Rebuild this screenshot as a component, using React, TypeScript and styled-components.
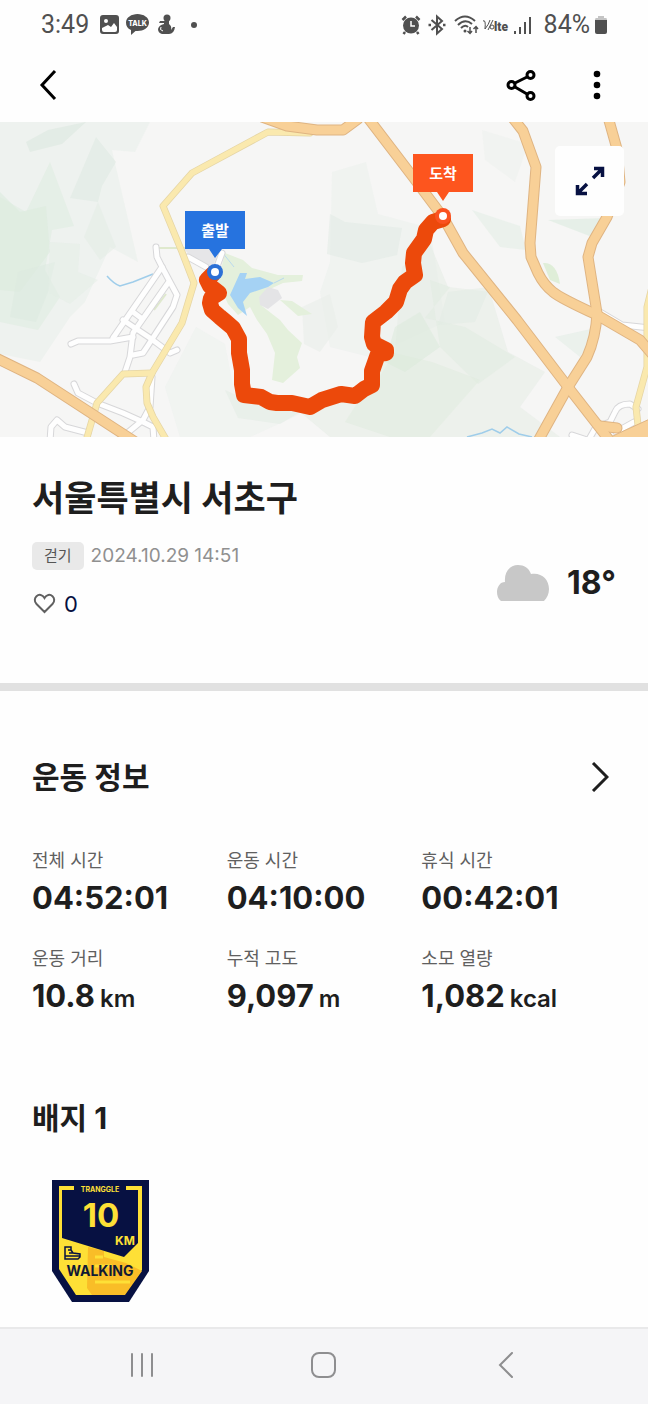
import React from "react";
import styled, { createGlobalStyle } from "styled-components";

const GlobalStyle = createGlobalStyle`
  *, *::before, *::after { box-sizing: border-box; }
  body { margin: 0; background: #fefefe; }
  button { font: inherit; color: inherit; background: none; border: 0; padding: 0; cursor: pointer; }
  h1, h2, dl, dd, dt { margin: 0; }
  svg { display: block; }
`;

const Screen = styled.div`
  display: flex;
  flex-direction: column;
  min-height: 100vh;
  background: #fefefe;
  color: #1e1e1e;
  font-family: Inter, "Noto Sans CJK KR", sans-serif;
`;

const StatusBar = styled.div`
  display: flex;
  justify-content: space-between;
  align-items: center;
  height: 50px;
  padding: 0 40px 0 41px;
  color: #505050;
  font: 400 25px/28px Roboto, sans-serif;
`;

const StatusGroup = styled.div<{ $gap: number }>`
  display: flex;
  align-items: center;
  gap: ${(p) => p.$gap}px;
`;

const AppBar = styled.header`
  display: flex;
  justify-content: space-between;
  align-items: center;
  height: 72px;
  padding: 0 27px 3px 24px;
  color: #000;
`;

const AppActions = styled.div`
  display: flex;
  gap: 28px;
`;

const IconButton = styled.button`
  display: flex;
  align-items: center;
  justify-content: center;
  width: 48px;
  height: 48px;
`;

const MapArea = styled.section`
  position: relative;
  overflow: hidden;
  > svg { width: 100%; height: auto; }
`;

const ExpandButton = styled.button`
  position: absolute;
  top: 24px;
  right: 24px;
  display: flex;
  align-items: center;
  justify-content: center;
  width: 69px;
  height: 70px;
  border-radius: 5px;
  background: #fefefe;
`;

const Summary = styled.section`
  padding: 37px 32px 65px;
`;

const Title = styled.h1`
  font-size: 35px;
  line-height: 48px;
  font-weight: 700;
`;

const SummaryRow = styled.div`
  display: flex;
  justify-content: space-between;
  align-items: center;
  margin-top: 20px;
`;

const Meta = styled.div`
  display: flex;
  flex-direction: column;
  align-items: flex-start;
  gap: 20px;
`;

const Activity = styled.div`
  display: flex;
  align-items: center;
  gap: 7px;
`;

const Chip = styled.span`
  padding: 0 12px;
  border-radius: 5px;
  background: #e9e9e9;
  color: #555;
  font-size: 15px;
  line-height: 28px;
`;

const DateText = styled.time`
  color: #909090;
  font-size: 19px;
  line-height: 28px;
`;

const LikeButton = styled.button`
  display: flex;
  align-items: center;
  gap: 7px;
  color: #07103f;
  font-size: 22px;
  line-height: 28px;
`;

const Weather = styled.div`
  display: flex;
  align-items: center;
  gap: 18px;
  padding-top: 5px;
  font-size: 32px;
  line-height: 40px;
  font-weight: 700;
`;

const Divider = styled.hr`
  width: 100%;
  height: 8px;
  margin: 0;
  border: 0;
  background: #e1e1e1;
`;

const Details = styled.main`
  flex: 1;
  padding: 66px 32px 24px;
`;

const SectionHead = styled.div`
  display: flex;
  justify-content: space-between;
  align-items: center;
  height: 40px;
`;

const SectionTitle = styled.h2`
  font-size: 30px;
  line-height: 40px;
  font-weight: 700;
`;

const MoreButton = styled.button`
  display: flex;
  align-items: center;
  justify-content: center;
  width: 32px;
  height: 40px;
`;

const StatGrid = styled.dl`
  display: grid;
  grid-template-columns: repeat(3, 1fr);
  row-gap: 29px;
  margin: 52px 0 82px;
`;

const StatLabel = styled.dt`
  color: #606060;
  font-size: 18px;
  line-height: 24px;
`;

const StatValue = styled.dd`
  margin-top: 5px;
  font-size: 31px;
  line-height: 40px;
  font-weight: 700;
  white-space: nowrap;
`;

const Unit = styled.span`
  margin-left: 5px;
  font-size: 24px;
  line-height: 24px;
  font-weight: 600;
`;

const BadgeList = styled.div`
  display: flex;
  padding: 42px 20px 0;
`;

const SystemNav = styled.nav`
  display: grid;
  flex-shrink: 0;
  grid-template-columns: repeat(3, 182px);
  justify-content: center;
  height: 77px;
  padding-bottom: 3px;
  border-top: 2px solid #e9e9ea;
  background: #f5f5f7;
`;

const NavButton = styled.button`
  display: flex;
  align-items: center;
  justify-content: center;
`;

const ORANGE_ROADS = [
  "M-4 236L37 256L134 319",
  "M262 -5L287 4L317 8H343L358 -3",
  "M368 -4L413 55L443 95L463 131L517 198L568 265L610 319",
  "M512 -5L523 9L536 45L530 121L531 135L538 151Q544 163 553 170Q560 176 597 193L640 218L652 232",
  "M608 -5L617 27L620 60L607 95L592 121L588 135L597 191Q596 215 587 235L568 265L538 319",
  "M600 304L617 306",
];
const YELLOW_ROADS = [
  "M310 11L268 10L192 51L163 84L182 130L194 161L182 201L152 251L146 265L147 281L153 295L167 319",
  "M152 251L123 252L97 281L86 319",
  "M652 165L647 185V245L636 285L638 303",
];
const WHITE_ROADS = [
  "M156 125L157 135L162 145L170 160L177 173L173 185L147 225L143 231L133 233",
  "M162 145L113 216",
  "M71 222L78 219H110L133 215",
  "M168 161L133 211L130 235L125 250",
  "M123 198L150 216L170 231L177 228",
  "M133 190L141 196",
  "M74 262L78 271L97 281L123 291L143 300L153 305L154 319",
  "M152 255L150 285L143 298L120 317",
  "M50 319L51 305L57 298L65 305L88 311",
  "M188 135L206 145",
  "M222 131L215 150",
  "M600 190L622 203L650 206",
  "M588 319L596 305L610 300L615 290Q618 282 630 282L638 287",
  "M572 313L590 319",
  "M616 310L634 300",
];
const ROUTE =
  "M213 152L207 158L210 164L219 171L211 176L210 181L212 188L220 195L226 200L233 206L239 217L239 231L242 248L242 262L244 273L261 275L270 280L277 281L292 281L310 285L322 278L341 272L355 274L364 267L372 263L372 249L378 232L386 231L386 228L374 222L372 215L373 200L386 190L396 180L400 167L405 160L415 153L413 141L414 131L424 117L426 108L433 100L443 97";

const HILLS: [string, string, number][] = [
  ["M0 0H150L135 30L112 28L138 140L110 125L85 180L70 195L40 240L0 232Z", "#ebf1ec", 0.7],
  ["M26 20L48 8L86 0L62 22L30 30Z", "#dce8e0", 0.6],
  ["M96 15L116 40L102 64L98 80L70 76L82 48Z", "#dfe9e2", 0.6],
  ["M50 40L74 104L52 108L45 148L60 175L38 208L0 200V75L26 90Z", "#e0ede1", 0.6],
  ["M0 70L20 90L46 84L50 130L20 170L0 168Z", "#dcebdd", 0.6],
  ["M18 150L55 140L48 170L36 200L10 195Z", "#dce9df", 0.5],
  ["M98 80L116 125L100 138L84 115Z", "#e2ece4", 0.5],
  ["M50 120L80 122L78 150L98 158L70 182L48 170Z", "#e4eee5", 0.5],
  ["M332 50L366 40L378 92L430 106L445 200L370 235L330 225L320 170L330 140Z", "#e9f0ea", 0.45],
  ["M330 92L345 100L402 106L397 133L362 141L327 132Z", "#e0eae3", 0.5],
  ["M402 145L430 122L448 165L490 170L508 230L545 250L520 285L560 315H330L300 290L370 270L395 230Z", "#e3ece4", 0.5],
  ["M430 158L450 165L425 196L465 205L515 235L478 262L440 225Z", "#dfece0", 0.5],
  ["M390 230L432 240L480 258L430 315H390L345 300Z", "#dfecde", 0.5],
  ["M395 205L420 190L440 225L405 250L385 240Z", "#daead9", 0.5],
  ["M448 170L490 165L475 200L438 203Z", "#e2ebe4", 0.5],
  ["M555 215L600 205L580 235Z", "#e0ebe3", 0.5],
  ["M482 8L528 22L515 60L485 38Z", "#eef1ee", 0.6],
  ["M472 88L520 104L526 128L500 125Z", "#e4eee6", 0.6],
  ["M548 98L606 96L592 115Z", "#dcebe0", 0.6],
  ["M196 205L225 222L235 275L300 292L250 315H180L165 265Z", "#ecf2ed", 0.5],
  ["M302 185L330 172L338 205L320 230L304 222Z", "#e9efea", 0.6],
  ["M225 268L262 285L300 290L280 302L238 296Z", "#e2ece3", 0.5],
];

function RouteMap() {
  return (
    <svg viewBox="0 0 648 315" role="img" aria-label="이동 경로 지도">
      <rect width="648" height="315" fill="#f6f6f5" />
      {HILLS.map(([d, fill, opacity]) => (
        <path key={d} d={d} fill={fill} opacity={opacity} />
      ))}
      <path d="M225 131L243 138L252 146L278 153L303 153L302 159L283 161L268 168L262 184L280 198L288 208L302 221L297 235L300 246L283 261L272 258L275 231L267 212L257 198L250 185L238 193L228 182L218 160Z" fill="#e4f0dc" />
      <path d="M280 178L292 179L312 192L298 194Z" fill="#e4f0dc" />
      <path d="M543 141Q557 140 560 162L550 158Z" fill="#dfeed8" />
      <path d="M259 175L268 165L278 168L282 176L268 187L260 183Z" fill="#e4e4e6" />
      <path d="M184 127H220L212 146L200 144Z" fill="#e6e6e8" />
      <path d="M157 126H186M166 172L154 188" fill="none" stroke="#dfe9cd" strokeWidth="2" />
      <path d="M240 151H247L245 157L260 155L274 161L268 165L250 171L243 180L247 194L238 186L230 173Z" fill="#a5d2f4" />
      <path d="M222 130L234 145M284 156L274 161" fill="none" stroke="#b9d9ee" strokeWidth="1" />
      <path d="M107 154Q114 162 120 164L133 160L153 152M467 315L482 311L492 307L500 311L507 305L519 312L532 315" fill="none" stroke="#9fcdea" strokeWidth="1.5" />
      <g fill="none" strokeLinejoin="round" strokeLinecap="round">
        {WHITE_ROADS.map((d) => <path key={d} d={d} stroke="#d7d7d9" strokeWidth="7" />)}
        {WHITE_ROADS.map((d) => <path key={d} d={d} stroke="#fefefe" strokeWidth="5" />)}
        {YELLOW_ROADS.map((d) => <path key={d} d={d} stroke="#e5d5a5" strokeWidth="7" />)}
        {YELLOW_ROADS.map((d) => <path key={d} d={d} stroke="#fae9ae" strokeWidth="5.500" />)}
        {ORANGE_ROADS.map((d) => <path key={d} d={d} stroke="#dfb482" strokeWidth="11" />)}
        <path d="M605 318L617 312L652 296V318Z" fill="#f8d097" stroke="#dfb482" />
        {ORANGE_ROADS.map((d) => <path key={d} d={d} stroke="#f8d097" strokeWidth="9" />)}
        <path d={ROUTE} stroke="#ec490b" strokeWidth="16" />
      </g>
      <circle cx="215" cy="150" r="8" fill="#2c70d6" />
      <circle cx="215" cy="150" r="4" fill="#fff" />
      <circle cx="443" cy="94" r="8" fill="#fa5220" />
      <circle cx="443" cy="94" r="4" fill="#fff" />
      <path d="M185 89H245V127H222L215 136L209 127H185Z" fill="#2673df" />
      <path d="M413 32H473V70H449L443 79L437 70H413Z" fill="#fd551e" />
      <g fill="#fff" fontSize="15" fontWeight="700" textAnchor="middle">
        <text x="215" y="114">출발</text>
        <text x="443" y="57">도착</text>
      </g>
    </svg>
  );
}

function NotificationIcons() {
  return (
    <svg width="100" height="24" viewBox="0 0 100 24" fill="#505050" aria-hidden="true">
      <path fillRule="evenodd" d="M4 2H17Q20 2 20 5V18Q20 21 17 21H4Q1 21 1 18V5Q1 2 4 2ZM3 15V17Q3 19 5 19H16Q18 19 18 17V14L15 10L12 14L9 12ZM7 6A2 2 0 1 0 7 10A2 2 0 1 0 7 6Z" />
      <path d="M38.500 1C44.500 1 50 4.500 50 9.500S44.500 18 38.500 18L36.500 18L32 22L32 17C28.500 15.500 27 13 27 9.500C27 4.500 32.500 1 38.500 1Z" />
      <text x="38.500" y="13" fill="#fff" fontFamily="Inter, sans-serif" fontSize="7" fontWeight="800" textAnchor="middle">TALK</text>
      <circle cx="68" cy="5" r="3.500" />
      <path d="M66 8H70L70 11Q73 13 72 17L74 14L76 14Q75 21 70 21H63Q59 20 59 16Q60 12 65 11L65 10L60 10L61 8Z" />
      <path d="M62 14Q60 17 64 18" fill="none" stroke="#fff" />
      <circle cx="95" cy="12" r="3" />
    </svg>
  );
}

function ConnectionIcons() {
  return (
    <svg width="131" height="24" viewBox="0 0 131 24" fill="none" stroke="#505050" aria-hidden="true">
      <circle cx="10" cy="12.500" r="8" fill="#505050" stroke="none" />
      <path d="M1.500 7L5 3.500M18.500 7L15 3.500M4 19L2.500 21M16 19L17.500 21" strokeWidth="2.500" />
      <path d="M10 8V13H14" stroke="#fff" strokeWidth="1.500" />
      <path d="M30.500 7L41 16L36 20.500V3.500L41 8L30.500 17" strokeWidth="2" />
      <path d="M27.500 12H30M42 12H44.500" strokeWidth="2.500" />
      <path d="M54 8Q64 -1 74 8M57 12Q64 5 71 11M60 15Q64 11 67 14" strokeWidth="2" />
      <circle cx="64" cy="18" r="1.500" fill="#505050" stroke="none" />
      <path d="M69 14V20M66.500 18L69 20.500L71 18M75 20V14M72.500 16L75 13.500L77 16" strokeWidth="1.500" />
      <path d="M82 8Q85 6 84 16Q88 11 89 7M92 7L87 17" strokeWidth="1" />
      <circle cx="91" cy="14" r="2" />
      <text x="93" y="18" fill="#505050" stroke="none" fontFamily="Roboto, sans-serif" fontSize="12" fontWeight="900">lte</text>
      <path d="M114 18V21M119 14V21M124 9V21M129 4V21" strokeWidth="2" />
    </svg>
  );
}

function WalkingBadge() {
  return (
    <svg width="97" height="122" viewBox="0 0 97 122" role="img" aria-label="10KM WALKING 배지">
      <path d="M0 0H97V91L77 122H20L0 91Z" fill="#071142" />
      <path d="M7 6H90V90L72 115H24L7 89Z" fill="#fee036" />
      <path d="M36 67L52 71V77L74 83L90 91L73 115H40L35 108Z" fill="#f9bd27" />
      <path d="M43 77H51M43 86H60M43 102H78" stroke="#fee036" strokeWidth="3" />
      <path d="M10 10H86V63L72 77L10 58Z" fill="#071142" />
      <path d="M22 5H74V12H22Z" fill="#071142" />
      <g fill="#fee036" fontWeight="700" textAnchor="middle">
        <text x="48" y="12" fontSize="7">TRANGGLE</text>
        <text x="49" y="47" fontSize="33">10</text>
        <text x="73" y="65" fontSize="12">KM</text>
      </g>
      <path d="M13 67H19V70L21 73L28 74V77L26 79H13ZM13 76H28M19 70H16M21 73H17" fill="none" stroke="#071142" strokeWidth="1.500" />
      <text x="48" y="96" fill="#111a35" fontSize="14" fontWeight="700" textAnchor="middle">WALKING</text>
    </svg>
  );
}

const STATS = [
  { label: "전체 시간", value: "04:52:01" },
  { label: "운동 시간", value: "04:10:00" },
  { label: "휴식 시간", value: "00:42:01" },
  { label: "운동 거리", value: "10.8", unit: "km" },
  { label: "누적 고도", value: "9,097", unit: "m" },
  { label: "소모 열량", value: "1,082", unit: "kcal" },
];

export default function App() {
  return (
    <Screen>
      <GlobalStyle />
      <StatusBar>
        <StatusGroup $gap={10}>
          <span>3:49</span>
          <NotificationIcons />
        </StatusGroup>
        <StatusGroup $gap={12}>
          <ConnectionIcons />
          <StatusGroup $gap={4}>
            <span>84%</span>
            <svg width="14" height="20" viewBox="0 0 14 20" aria-hidden="true">
              <path d="M4 1H10V3H12Q13 3 13 5H1Q1 3 2 3H4Z" fill="#c4c4c4" />
              <path d="M1 5H13V17Q13 19 11 19H3Q1 19 1 17Z" fill="#505050" />
            </svg>
          </StatusGroup>
        </StatusGroup>
      </StatusBar>

      <AppBar>
        <IconButton aria-label="뒤로">
          <svg width="18" height="32" viewBox="0 0 18 32" fill="none" stroke="currentColor" strokeWidth="3">
            <path d="M16 2L3 16L16 30" />
          </svg>
        </IconButton>
        <AppActions>
          <IconButton aria-label="공유">
            <svg width="30" height="32" viewBox="0 0 30 32" fill="none" stroke="currentColor" strokeWidth="3">
              <path d="M9 14L21 8M9 18L21 25" />
              <circle cx="5.500" cy="16" r="3.500" />
              <circle cx="24.500" cy="6" r="3.500" />
              <circle cx="24.500" cy="27" r="3.500" />
            </svg>
          </IconButton>
          <IconButton aria-label="더보기">
            <svg width="8" height="30" viewBox="0 0 8 30" fill="currentColor">
              <circle cx="4" cy="4" r="3.300" />
              <circle cx="4" cy="15" r="3.300" />
              <circle cx="4" cy="26" r="3.300" />
            </svg>
          </IconButton>
        </AppActions>
      </AppBar>

      <MapArea>
        <RouteMap />
        <ExpandButton aria-label="지도 확대">
          <svg width="30" height="30" viewBox="0 0 30 30" fill="none" stroke="#071142" strokeWidth="3.500">
            <path d="M19 2.500H27.500V11M27.500 2.500L18 12M2.500 19V27.500H12M2.500 27.500L12 18" />
          </svg>
        </ExpandButton>
      </MapArea>

      <Summary>
        <Title>서울특별시 서초구</Title>
        <SummaryRow>
          <Meta>
            <Activity>
              <Chip>걷기</Chip>
              <DateText dateTime="2024-10-29T14:51">2024.10.29 14:51</DateText>
            </Activity>
            <LikeButton aria-label="좋아요 0">
              <svg width="25" height="22" viewBox="0 0 25 22" fill="none" stroke="#606060" strokeWidth="2">
                <path d="M12.500 19L4.500 11C2 8.500 2.500 5 4.500 3.200C7 1 10.500 1.500 12.500 5C14.500 1.500 18 1 20.500 3.200C22.500 5 23 8.500 20.500 11Z" />
              </svg>
              <span>0</span>
            </LikeButton>
          </Meta>
          <Weather>
            <svg width="53" height="36" viewBox="0 0 53 36" fill="#c8c8c8" role="img" aria-label="흐림">
              <path d="M5 36C2 34 1 30 1 27C1 22 4 17 9 17C8 7 14 0 22 0C28 0 33 3 35 9C45 7 53 14 53 24C53 29 51 33 48 36Z" />
            </svg>
            <span>18°</span>
          </Weather>
        </SummaryRow>
      </Summary>

      <Divider />

      <Details>
        <SectionHead>
          <SectionTitle>운동 정보</SectionTitle>
          <MoreButton aria-label="운동 정보 더보기">
            <svg width="18" height="30" viewBox="0 0 18 30" fill="none" stroke="#1e1e1e" strokeWidth="3">
              <path d="M2 1L16 15L2 29" />
            </svg>
          </MoreButton>
        </SectionHead>
        <StatGrid>
          {STATS.map((s) => (
            <div key={s.label}>
              <StatLabel>{s.label}</StatLabel>
              <StatValue>
                {s.value}
                {s.unit && <Unit>{s.unit}</Unit>}
              </StatValue>
            </div>
          ))}
        </StatGrid>
        <SectionTitle>배지 1</SectionTitle>
        <BadgeList>
          <WalkingBadge />
        </BadgeList>
      </Details>

      <SystemNav aria-label="시스템 탐색">
        <NavButton aria-label="최근 앱">
          <svg width="26" height="26" viewBox="0 0 26 26" stroke="#8e8e90" strokeWidth="2" strokeLinecap="round">
            <path d="M3 2V24M13 2V24M23 2V24" />
          </svg>
        </NavButton>
        <NavButton aria-label="홈">
          <svg width="26" height="26" viewBox="0 0 26 26" fill="none" stroke="#8e8e90" strokeWidth="2">
            <rect x="1" y="1" width="23" height="24" rx="7" />
          </svg>
        </NavButton>
        <NavButton aria-label="뒤로 가기">
          <svg width="26" height="26" viewBox="0 0 26 26" fill="none" stroke="#8e8e90" strokeWidth="2" strokeLinecap="round">
            <path d="M19 1L7 13L19 25" />
          </svg>
        </NavButton>
      </SystemNav>
    </Screen>
  );
}
